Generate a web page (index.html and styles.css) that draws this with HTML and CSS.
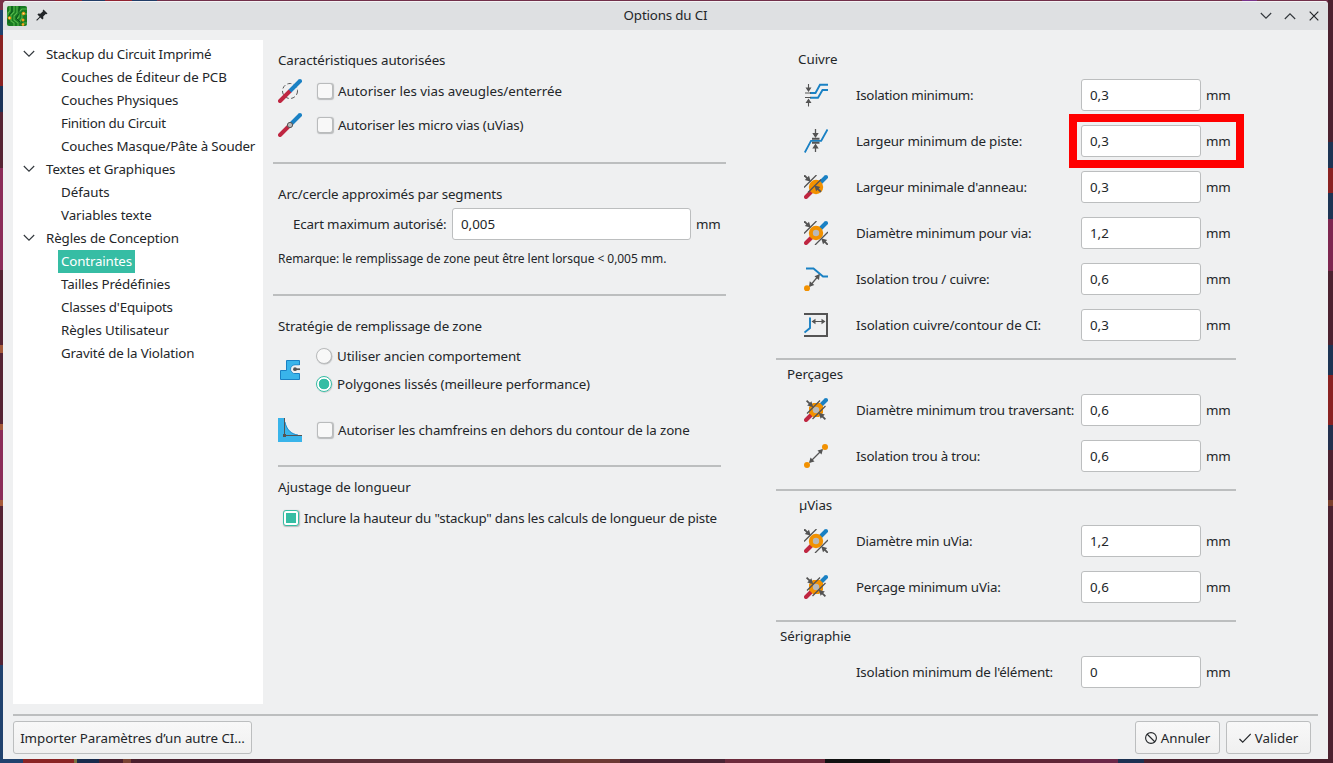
FILE: index.html
```
<!DOCTYPE html>
<html lang="fr">
<head>
<meta charset="utf-8">
<title>Options du CI</title>
<link rel="stylesheet" href="styles.css">
</head>
<body>
<svg class="defs" width="0" height="0">
  <defs>
    <symbol id="chev" viewBox="0 0 12 8"><path d="M.8 1 6 6.200 11.200 1" fill="none" stroke="#31363b" stroke-width="1.100"/></symbol>
    <g id="arrow"><path d="M0 0-6-1.800-1.800-6Z" fill="#545454"/><path d="m-3-3-3.600-3.600" stroke="#545454" stroke-width="1.800"/></g>
    <g id="track"><path d="M2 22 12 12" stroke="#bf2641" stroke-width="4" stroke-linecap="round"/><path d="M22 2h.01" stroke="#1a81c4" stroke-width="4" stroke-linecap="round"/><path d="M12 12 22 2" stroke="#1a81c4" stroke-width="4"/></g>
    <symbol id="blind" viewBox="0 0 24 24"><circle cx="12" cy="12" r="7.500" fill="none" stroke="#545454" stroke-width="1" stroke-dasharray="4 2.500"/><use href="#track"/></symbol>
    <symbol id="micro" viewBox="0 0 24 24"><use href="#track"/><circle cx="12" cy="12" r="2.600" fill="#b9b9b9" stroke="#545454"/></symbol>
    <symbol id="clear" viewBox="0 0 24 24"><path d="M6 10h5.500L16 1.800h8M6 14.700h8L18.500 7H24" fill="none" stroke="#1a81c4" stroke-width="1.900"/><path d="M1 10h6M1 14.500h6M4.500 1v5M4.500 18v5.500" stroke="#545454" stroke-width="1.100"/><path d="M1.500 4.500h6l-3 4.500zM1.500 20h6l-3-4.500z" fill="#545454"/></symbol>
    <symbol id="width" viewBox="0 0 24 24"><path d="M.8 23.500 7 11.800h10.200L23.500.5" fill="none" stroke="#1a81c4" stroke-width="1.800"/><path d="M8 9.700h7.500M8 13.800h7.500" stroke="#545454" stroke-width="2"/><path d="M11.500 0v6M11.500 18v5" stroke="#545454" stroke-width="1.300"/><path d="M8.300 4h6.400l-3.200 5zM8.300 19.500h6.400l-3.200-5z" fill="#545454"/></symbol>
    <symbol id="ring" viewBox="0 0 24 24"><use href="#track"/><circle cx="12" cy="12" r="7.200" fill="#f29100"/><path d="M0 12.500 12.500 0M4 17.500 17 4.500" stroke="#545454" stroke-width="1.300"/><use href="#arrow" transform="translate(6.800 6.800)"/><use href="#arrow" transform="translate(10.300 10.300) rotate(180)"/></symbol>
    <symbol id="via" viewBox="0 0 24 24"><use href="#track"/><circle cx="12" cy="12" r="7.200" fill="#f29100"/><circle cx="12" cy="12" r="3.200" fill="#b9b9b9"/><path d="M0 12.500 12.500 0M11 24 24 11" stroke="#545454" stroke-width="1.300"/><use href="#arrow" transform="translate(6.800 6.800)"/><use href="#arrow" transform="translate(17.200 17.200) rotate(180)"/></symbol>
    <symbol id="drill" viewBox="0 0 24 24"><use href="#track"/><path d="M5 15V9L9 5h7l3 3v7l-4 4H9Z" fill="#f29100"/><circle cx="12" cy="12" r="3.200" fill="#b9b9b9"/><path d="M3 15.500 16 2.500M8.500 21 21.500 8" stroke="#545454" stroke-width="1.300"/><use href="#arrow" transform="translate(9.200 9.200)"/><use href="#arrow" transform="translate(14.800 14.800) rotate(180)"/></symbol>
    <symbol id="holecu" viewBox="0 0 24 24"><path d="M2 1.500h7.500L19 9.500h5" fill="none" stroke="#1a81c4" stroke-width="1.900"/><path d="m6 19 9-11" stroke="#545454" stroke-width="1.200"/><path d="m15.800 7-5.300 2.200 4.500 3.700zM5 20l.8-5.800 4.500 3.700z" fill="#545454"/><circle cx="3" cy="21.300" r="3" fill="#f29100"/></symbol>
    <symbol id="edge" viewBox="0 0 24 24"><path d="M0 1h23v22H0" fill="none" stroke="#545454" stroke-width="2"/><path d="M6 4.500v10.500L.5 19.500" fill="none" stroke="#1a81c4" stroke-width="1.900"/><path d="M8 8.500h13" stroke="#545454"/><path d="m7.500 8.500 4-2.700v5.400zM21.500 8.500l-4-2.700v5.400z" fill="#545454"/></symbol>
    <symbol id="holes" viewBox="0 0 24 24"><path d="m6 18 12-12" stroke="#545454" stroke-width="1.200"/><path d="m19 5-5.500 1.500 4 4zM5 19l1.500-5.500 4 4z" fill="#545454"/><circle cx="3" cy="21" r="3" fill="#f29100"/><circle cx="21" cy="3" r="3" fill="#f29100"/></symbol>
    <symbol id="zone" viewBox="0 0 24 24"><path d="M2.500 21.500V12.500h6v-10h13V7H17a4.200 4.200 0 0 0 0 8.500h4.500v6Z" fill="#39b4ea" stroke="#1a81c4"/><path d="M22.500 7.500H17a3.700 3.700 0 0 0 0 7.500h5.500Z" fill="#eff0f1"/><path d="M22 11.200h-5" stroke="#545454" stroke-width="1.700"/><circle cx="17" cy="11.200" r="1.900" fill="#545454"/></symbol>
    <symbol id="fillet" viewBox="0 0 24 24"><path d="M0 0h6.500c1 11 7 17 17.500 17.500V24H0Z" fill="#39b4ea"/><path d="M7 4c1.500 8 6.500 12.200 13 13" fill="none" stroke="#1a81c4" stroke-width=".8"/><path d="M6.500 0v17.500H24" fill="none" stroke="#545454"/><rect x="5" y="16" width="3" height="3" fill="#545454"/></symbol>
  </defs>
</svg>
<div class="window">
  <header class="titlebar">
    <svg class="logo" viewBox="0 0 20 20"><rect width="20" height="20" rx="2" fill="#187b22"/><path d="M3 0v5L1 7v5m6-12v6L4 9v6l3 2v3M10 0v7L7 10v4l4 3v3M20 3h-5l-3 3v5l-2 2m10-5h-5v4l-2 3v5m7-3h-4" fill="none" stroke="#54b84a" stroke-width="1.100"/><path d="M5 0v6L2 9v8m11-17-1 3v5l-3 4 4 4v4" fill="none" stroke="#07551a"/><g fill="#ffe08a" stroke="#f29100"><circle cx="2.500" cy="12" r="1.300"/><circle cx="16.500" cy="7.500" r="1.300"/><circle cx="16" cy="14" r="1.100"/><circle cx="16" cy="18.500" r="1"/></g></svg>
    <svg class="pin" viewBox="0 0 12 12"><path d="m7.500.5 4 4-1 .7-.8-.2-2.500 2.600.2 1.900-1 1-2.200-2.100L1 11.800.2 11l3.400-3.200-2.200-2.300 1-1 1.900.3L7 2.300l-.3-.8Z" fill="#232629"/></svg>
    <div class="title t15">Options du CI</div>
    <div class="controls">
      <svg class="chev"><use href="#chev"/></svg>
      <svg class="chev up"><use href="#chev"/></svg>
      <svg class="close" viewBox="0 0 10 10"><path d="m.7.700 8.600 8.600m0-8.600L.7 9.300" stroke="#232629" stroke-width="1.200"/></svg>
    </div>
  </header>

  <main class="content">
    <nav class="tree">
      <div class="branch t20"><svg class="chev"><use href="#chev"/></svg><span>Stackup du Circuit Imprimé</span></div>
      <div class="leaf t12"><span>Couches de Éditeur de PCB</span></div>
      <div class="leaf t15"><span>Couches Physiques</span></div>
      <div class="leaf t25"><span>Finition du Circuit</span></div>
      <div class="leaf t15"><span>Couches Masque/Pâte à Souder</span></div>
      <div class="branch t10"><svg class="chev"><use href="#chev"/></svg><span>Textes et Graphiques</span></div>
      <div class="leaf"><span>Défauts</span></div>
      <div class="leaf t10"><span>Variables texte</span></div>
      <div class="branch t12"><svg class="chev"><use href="#chev"/></svg><span>Règles de Conception</span></div>
      <div class="leaf selected t15"><span>Contraintes</span></div>
      <div class="leaf t12"><span>Tailles Prédéfinies</span></div>
      <div class="leaf t20"><span>Classes d'Equipots</span></div>
      <div class="leaf t10"><span>Règles Utilisateur</span></div>
      <div class="leaf t15"><span>Gravité de la Violation</span></div>
    </nav>

    <section class="options">
      <h2 class="t10">Caractéristiques autorisées</h2>
      <div class="option"><svg class="icon"><use href="#blind"/></svg><span class="check"></span>Autoriser les vias aveugles/enterrée</div>
      <div class="option second t15"><svg class="icon"><use href="#micro"/></svg><span class="check"></span>Autoriser les micro vias (uVias)</div>
      <hr class="gap-large">
      <h2 class="t12">Arc/cercle approximés par segments</h2>
      <div class="deviation t15"><span class="label">Ecart maximum autorisé:</span><span class="field">0,005</span><span>mm</span></div>
      <p class="note">Remarque: le remplissage de zone peut être lent lorsque &lt; 0,005 mm.</p>
      <hr class="gap-note">
      <h2 class="t12">Stratégie de remplissage de zone</h2>
      <div class="strategy t10">
        <svg class="icon"><use href="#zone"/></svg>
        <div class="radios">
          <div><span class="radio"></span>Utiliser ancien comportement</div>
          <div><span class="radio on"></span>Polygones lissés (meilleure performance)</div>
        </div>
      </div>
      <div class="option chamfer t12"><svg class="icon"><use href="#fillet"/></svg><span class="check"></span>Autoriser les chamfreins en dehors du contour de la zone</div>
      <hr class="inset">
      <h2 class="tight t10">Ajustage de longueur</h2>
      <div class="option tuning t20"><span class="check on"></span>Inclure la hauteur du "stackup" dans les calculs de longueur de piste</div>
    </section>

    <section class="limits">
      <h2 class="copper">Cuivre</h2>
      <div class="limit"><svg class="icon"><use href="#clear"/></svg><span class="name t25">Isolation minimum:</span><span class="field">0,3</span><span class="unit">mm</span></div>
      <div class="limit marked"><svg class="icon"><use href="#width"/></svg><span class="name t15">Largeur minimum de piste:</span><span class="field">0,3</span><span class="unit">mm</span></div>
      <div class="limit"><svg class="icon"><use href="#ring"/></svg><span class="name t20">Largeur minimale d'anneau:</span><span class="field">0,3</span><span class="unit">mm</span></div>
      <div class="limit"><svg class="icon"><use href="#via"/></svg><span class="name t20">Diamètre minimum pour via:</span><span class="field">1,2</span><span class="unit">mm</span></div>
      <div class="limit"><svg class="icon"><use href="#holecu"/></svg><span class="name t15">Isolation trou / cuivre:</span><span class="field">0,6</span><span class="unit">mm</span></div>
      <div class="limit"><svg class="icon"><use href="#edge"/></svg><span class="name t12">Isolation cuivre/contour de CI:</span><span class="field">0,3</span><span class="unit">mm</span></div>
      <hr>
      <h2 class="holes t10">Perçages</h2>
      <div class="limit"><svg class="icon"><use href="#drill"/></svg><span class="name t15">Diamètre minimum trou traversant:</span><span class="field">0,6</span><span class="unit">mm</span></div>
      <div class="limit"><svg class="icon"><use href="#holes"/></svg><span class="name t20">Isolation trou à trou:</span><span class="field">0,6</span><span class="unit">mm</span></div>
      <hr>
      <h2 class="uvias t10">µVias</h2>
      <div class="limit"><svg class="icon"><use href="#via"/></svg><span class="name t20">Diamètre min uVia:</span><span class="field">1,2</span><span class="unit">mm</span></div>
      <div class="limit"><svg class="icon"><use href="#drill"/></svg><span class="name t20">Perçage minimum uVia:</span><span class="field">0,6</span><span class="unit">mm</span></div>
      <hr>
      <h2 class="silk t10">Sérigraphie</h2>
      <div class="limit"><span class="icon"></span><span class="name t15">Isolation minimum de l'élément:</span><span class="field">0</span><span class="unit">mm</span></div>
    </section>
  </main>

  <footer class="footer">
    <button class="import">Importer Paramètres d’un autre CI...</button>
    <button class="cancel"><svg viewBox="0 0 12 12"><circle cx="6" cy="6" r="5.400" fill="none" stroke="#232629" stroke-width="1.100"/><path d="m2 2 8 8" stroke="#232629" stroke-width="1.100"/></svg>Annuler</button>
    <button class="ok"><svg viewBox="0 0 12 12"><path d="m.5 7 3.200 3.200L11.700 2" fill="none" stroke="#232629" stroke-width="1.100"/></svg>Valider</button>
  </footer>
</div>
</body>
</html>
```
FILE: styles.css
```
*, *::after { box-sizing: border-box; }
body {
  margin: 0;
  width: 1333px;
  height: 763px;
  padding: 1px 5px 4px 3px;
  overflow: hidden;
  font: 13.333px/20px "Noto Sans", sans-serif;
  color: #232629;
  background:
    linear-gradient(90deg, #6b2748 0 38px, #1c3152 38px 64px, #4b202e 64px) 1080px 759px / 253px 4px no-repeat,
    linear-gradient(90deg, #20426e 0 23px, #8a2424 23px 74px, #7a7340 74px 77px, #182b4c 77px 99px, #4b202e 99px 123px, #7a4434 123px 131px, #4b202e 131px 270px, #5c3038 270px 560px, #6d3a34 560px 620px, #4a2434 620px 725px, #6d2a3c 725px 825px, #111 825px 890px, #5f2636 890px) 0 759px / 1080px 4px no-repeat,
    linear-gradient(#4c2230 0 142px, #1d3454 142px 168px, #8a2222 168px 193px, #1d3454 193px 219px, #7d2650 219px 271px, #4c2230 271px 345px, #1d3454 345px 375px, #8a2222 375px 425px, #23304e 425px 450px, #4c2230 450px 500px, #7a3f2c 500px 506px, #4c2230 506px) 1328px 0 / 5px 763px no-repeat,
    linear-gradient(#7a3048 0 10px, #20426e 10px 35px, #8a2222 35px 86px, #1a3358 86px 112px, #562434 112px 168px, #8a2c58 168px 270px, #562434 270px 345px, #a65a3a 345px 353px, #562434 353px 424px, #a65a3a 424px 430px, #8a2c58 430px 500px, #a65a3a 500px 506px, #562434 506px 665px, #20426e 665px) 0 0 / 3px 763px no-repeat,
    linear-gradient(90deg, #71304a 0 55px, #912331 55px 82px, #213d67 82px 105px, #912331 105px 132px, #213d67 132px 157px, #71304a 157px 1242px, #78348c 1242px 1257px, #71304a 1257px);
}
.defs { position: absolute; }
h2, p { margin: 0; font-size: inherit; font-weight: 400; }
svg { display: block; flex: none; }
hr { height: 2px; margin: 0; border: 0; background: #bcbebf; }

/* Text tracking steps */
.t10 { letter-spacing: -.1px; }
.t12 { letter-spacing: -.125px; }
.t15 { letter-spacing: -.16px; }
.t20 { letter-spacing: -.2px; }
.t25 { letter-spacing: -.27px; }

.window {
  display: flex;
  flex-direction: column;
  height: 758px;
  border-radius: 4px 4px 0 0;
  background: #eff0f1;
  overflow: hidden;
}
.titlebar {
  display: flex;
  align-items: center;
  height: 29px;
  padding: 0 9px 0 4px;
  background: #dee0e2;
  border-top: 1px solid #f4f4f5;
}
.logo { width: 20px; height: 20px; }
.pin { width: 12px; height: 12px; margin: 0 0 2px 9px; }
.title { flex: 1; padding: 0 0 2px 23px; text-align: center; }
.controls { display: flex; align-items: center; gap: 12px; padding-bottom: 1px; }
.chev { width: 12px; height: 8px; }
.up { transform: rotate(180deg); }
.close { width: 10px; height: 10px; margin-left: 1px; }

.content { display: flex; height: 684px; }
.tree {
  width: 250px;
  height: 664px;
  margin: 10px 10px 0;
  padding-top: 3px;
  background: #fff;
}
.branch, .leaf { display: flex; align-items: center; height: 23px; white-space: nowrap; }
.branch { gap: 11px; padding-left: 10px; }
.branch .chev { margin-bottom: 1px; }
.branch span { height: 23px; line-height: 23px; }
.leaf { padding-left: 45px; }
.leaf span { height: 23px; padding: 1px 3px 0; line-height: 21px; }
.selected span { background: #36bda4; color: #fff; }

.options { width: 453px; padding-top: 20px; white-space: nowrap; }
.options h2 { height: 20px; margin: 20px 0 0 5px; }
.options h2:first-child { margin-top: 0; }
.options h2.tight { margin-top: 10px; }
.option { display: flex; align-items: center; height: 34px; margin-top: 4px; padding-left: 5px; }
.option.second { margin-top: 0; }
.option.chamfer { margin-top: 15px; }
.option.tuning { padding-left: 10px; }
.icon { width: 24px; height: 24px; flex: none; }
.check, .radio {
  flex: none;
  width: 16px;
  height: 16px;
  margin-right: 5px;
  border: 1px solid #b9bbbc;
  border-radius: 3px;
  background: #f8f8f8;
  box-shadow: .5px .5px 1px #b9bbbc;
}
.icon + .check { margin-left: 15px; }
.radio { border-radius: 50%; }
.check.on, .radio.on { border-color: #36bda4; }
.check.on { background: linear-gradient(#36bda4, #36bda4) center / 10px 10px no-repeat #fff; }
.radio.on { background: radial-gradient(circle, #36bda4 5px, #fff 5.600px); }
.gap-large { margin-top: 20px; }
.gap-note { margin-top: 25px; }
.inset { margin: 18px 5px 0; }
.field {
  height: 32px;
  padding-left: 8px;
  line-height: 31px;
  letter-spacing: 0;
  background: #fff;
  border: 1px solid #bcbebf;
  border-radius: 3px;
}
.deviation { display: flex; align-items: center; height: 32px; margin-top: 4px; padding-left: 20px; }
.deviation .label { width: 159px; }
.deviation .field { width: 239px; margin-right: 5px; }
.note { height: 20px; margin: 9px 0 0 5px; font-size: 12px; letter-spacing: -.05px; }
.strategy { display: flex; align-items: center; margin-top: 6px; padding-left: 5px; }
.radios { margin-left: 14px; }
.radios div { display: flex; align-items: center; height: 28px; }

.limits { width: 460px; margin-left: 50px; padding-top: 19px; white-space: nowrap; }
.limits h2 { height: 20px; margin: 4px 0 3px; }
.limits h2.copper { margin-top: 0; padding-left: 22px; }
.holes { padding-left: 11px; }
.uvias { padding-left: 23px; }
.silk { padding-left: 4px; }
.limits hr { margin-top: 10px; }
.limit { display: flex; align-items: center; height: 46px; padding-left: 28px; position: relative; }
.name { width: 225px; margin-left: 28px; }
.unit { letter-spacing: -.3px; }
.limit .field { width: 120px; margin-right: 5px; }
.marked::after {
  content: "";
  position: absolute;
  z-index: 1;
  left: 293px;
  top: -4px;
  width: 175px;
  height: 54px;
  border: 8px solid #f00;
}

.footer {
  display: flex;
  margin: 0 10px;
  padding: 5px 7px 0 0;
  border-top: 2px solid #bcbebf;
}
button {
  display: flex;
  align-items: center;
  justify-content: center;
  height: 33px;
  padding: 1px 0 0;
  gap: 4px;
  font: inherit;
  color: inherit;
  border: 1px solid #bcbebf;
  border-radius: 3px;
  background: linear-gradient(#f8f8f8, #f0f0f0);
  white-space: nowrap;
}
button svg { width: 12px; height: 12px; }
.import { width: 239px; letter-spacing: -.04px; }
.cancel { width: 85px; margin-left: auto; }
.ok { width: 85px; margin-left: 6px; }
```
